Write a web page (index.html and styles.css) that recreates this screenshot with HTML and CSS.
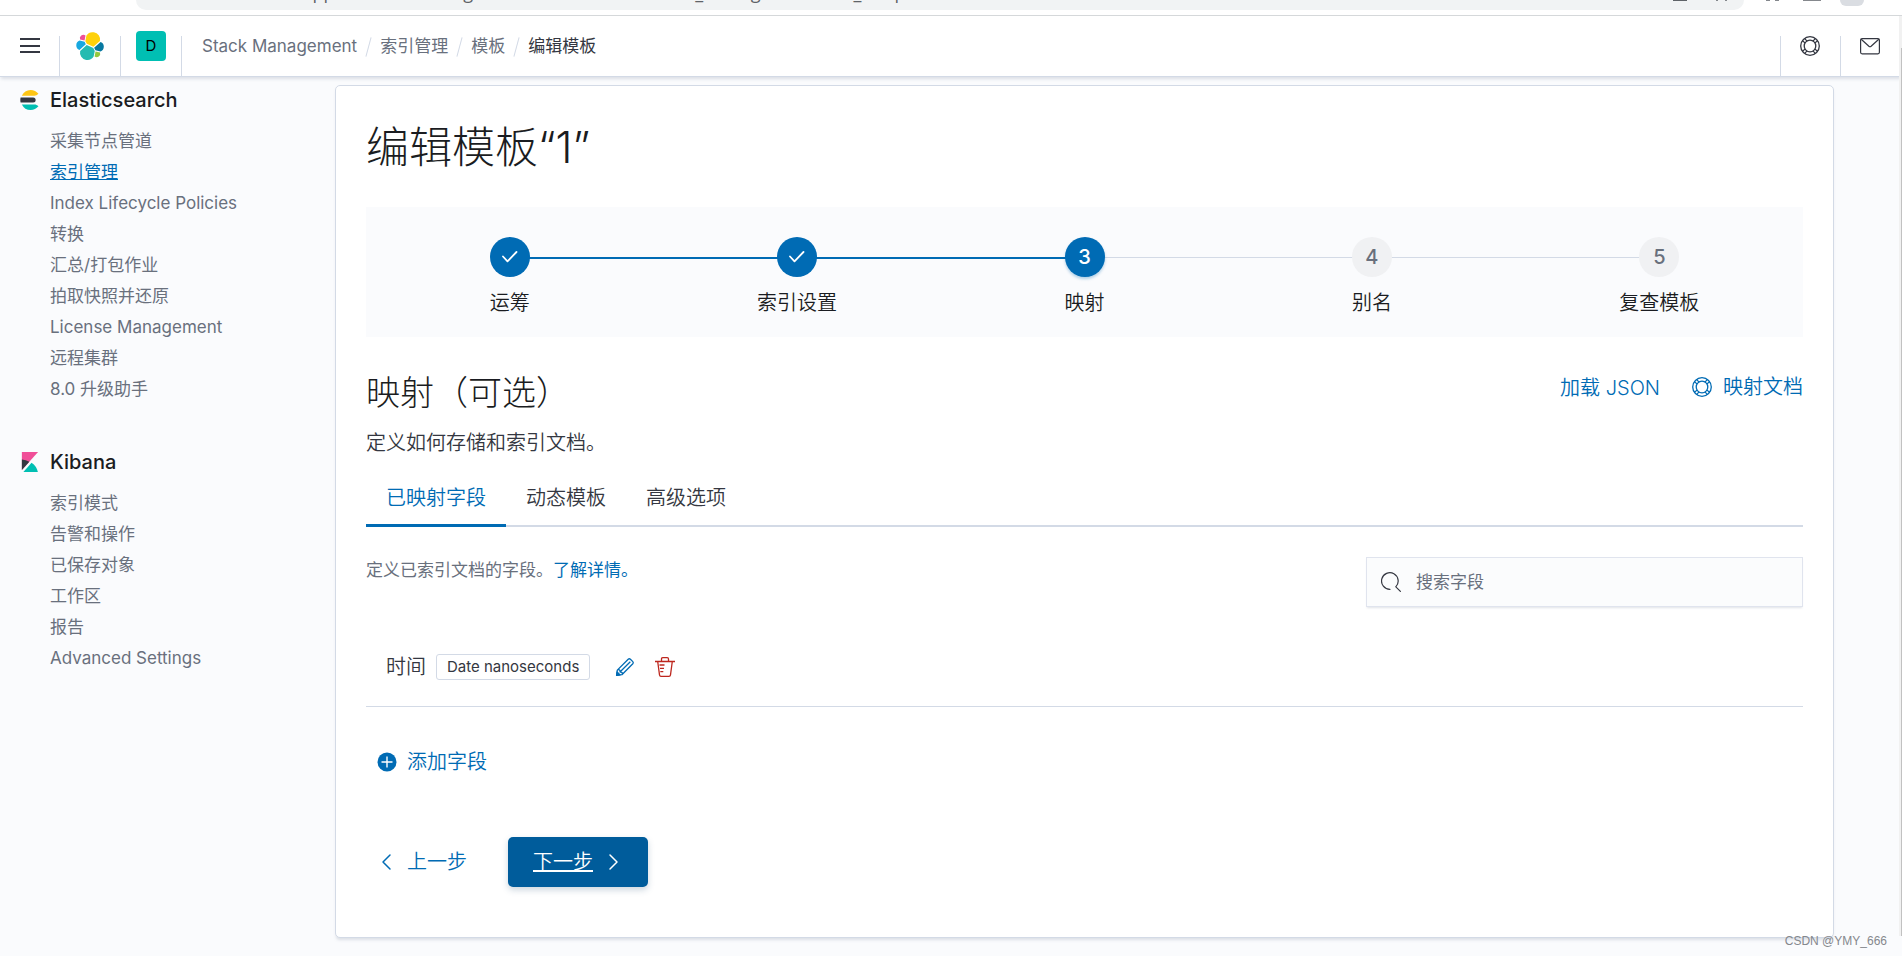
FILE: index.html
```html
<!DOCTYPE html>
<html lang="zh-CN">
<head>
<meta charset="utf-8">
<title>编辑模板 - Elastic</title>
<link rel="stylesheet" href="styles.css">
</head>
<body>
<svg class="defs" aria-hidden="true">
  <symbol id="i-help" viewBox="0 0 20 20"><g fill="none" stroke="currentColor" stroke-width="1.300"><circle cx="10" cy="10" r="9.300"/><circle cx="10" cy="10" r="5.800"/><path d="M4.600 2.400l2.400 2.700M2.400 4.600l2.700 2.400M15.400 2.400l-2.400 2.700M17.600 4.600l-2.700 2.400M4.600 17.600l2.400-2.700M2.400 15.400l2.700-2.400M15.400 17.600l-2.400-2.700M17.600 15.400l-2.700-2.400" stroke-width="1.200"/></g></symbol>
</svg>
<div class="browser">
  <div class="browser-address"><span class="url">/app/kibana#/management/elasticsearch/index_management/edit_template/1</span><span class="marks"><i></i><i></i></span></div>
  <div class="browser-tools"><i class="grid"></i><i></i><i class="profile"></i></div>
</div>
<header class="header">
  <button class="header-item" aria-label="菜单"><svg width="20" height="20" viewBox="0 0 20 20"><path d="M0 3h20M0 10h20M0 16h20" stroke="#343741" stroke-width="2"/></svg></button>
  <a class="header-item" href="#" aria-label="Elastic"><svg class="logo" width="30" height="30" viewBox="0 0 32 32"><path fill="#FED10A" d="M12.600 13.700l7 3.200 7-6.200a7.800 7.800 0 0 0-6.500-9.300 7.800 7.800 0 0 0-7.900 3.400l-1.200 6.100z"/><path fill="#24BBB1" d="M5.500 21.300a7.900 7.900 0 0 0 6.400 9.500 7.900 7.900 0 0 0 8-3.500l1.200-6.100-1.600-3-7-3.200z"/><path fill="#EF5098" d="M5.400 9.100l4.800 1.100 1-5.500a3.800 3.800 0 0 0-5.800 4.400z"/><path fill="#17A8E0" d="M5 10.200a5.300 5.300 0 0 0-.2 10l6.700-6.100-1.200-2.700z"/><path fill="#93C83E" d="M20.900 27.200a3.800 3.800 0 0 0 5.800-4.300l-4.800-1.100z"/><path fill="#0779A1" d="M21.800 20.500l5.300 1.300a5.300 5.300 0 0 0 .2-10l-6.900 6z"/></svg></a>
  <button class="header-item"><span class="avatar">D</span></button>
  <nav class="crumbs" aria-label="导航"><a href="#">Stack Management</a><a href="#">索引管理</a><a href="#">模板</a><span>编辑模板</span></nav>
  <button class="header-item right" aria-label="帮助"><svg width="20" height="20"><use href="#i-help"/></svg></button>
  <button class="header-item right" aria-label="新闻"><svg width="20" height="20" viewBox="0 0 20 20" fill="none" stroke="#343741" stroke-width="1.200"><rect x=".6" y="2.600" width="18.800" height="15.200" rx="1.500"/><path d="M1.200 3.200l7.700 7.100q1.100.9 2.200 0l7.700-7.100"/></svg></button>
</header>
<div class="page">
  <nav class="side" aria-label="Stack Management">
    <section>
      <h2><svg width="20" height="20" viewBox="0 0 32 32"><path fill="#FEC514" d="M3 9a16 16 0 0 1 14-9c5 0 9.400 2.400 12.500 6-2 2-4 3-6.500 3z"/><path fill="#343741" d="M1 12h20a4 4 0 0 1 0 8H1a16 16 0 0 1 0-8z"/><path fill="#00BFB3" d="M3 23h20c2.500 0 4.500 1 6.500 3A16.500 16.500 0 0 1 17 32 16 16 0 0 1 3 23z"/></svg>Elasticsearch</h2>
      <a href="#">采集节点管道</a><a href="#" class="on">索引管理</a><a href="#">Index Lifecycle Policies</a><a href="#">转换</a><a href="#">汇总/打包作业</a><a href="#">拍取快照并还原</a><a href="#">License Management</a><a href="#">远程集群</a><a href="#">8.0 升级助手</a>
    </section>
    <section>
      <h2><svg width="20" height="20" viewBox="0 0 32 32"><path fill="#F04E98" d="M3 0v28.800L28.900 0z"/><path fill="#343741" d="M3 12v16.800l11.900-13.200A25 25 0 0 0 3 12z"/><path fill="#00BFB3" d="M18.500 17.200L5.400 31.900h23.200a24 24 0 0 0-10.100-14.700z"/></svg>Kibana</h2>
      <a href="#">索引模式</a><a href="#">告警和操作</a><a href="#">已保存对象</a><a href="#">工作区</a><a href="#">报告</a><a href="#">Advanced Settings</a>
    </section>
  </nav>
  <main class="panel">
    <h1>编辑模板“1”</h1>
    <ol class="steps">
      <li class="done"><button><b><svg width="20" height="20" viewBox="0 0 20 20"><path d="M3 9.500l4.500 4.800L16.500 5" fill="none" stroke="#fff" stroke-width="1.800" stroke-linecap="round" stroke-linejoin="round"/></svg></b>运筹</button></li>
      <li class="done"><button><b><svg width="20" height="20" viewBox="0 0 20 20"><path d="M3 9.500l4.500 4.800L16.500 5" fill="none" stroke="#fff" stroke-width="1.800" stroke-linecap="round" stroke-linejoin="round"/></svg></b>索引设置</button></li>
      <li class="current"><button><b>3</b>映射</button></li>
      <li><button><b>4</b>别名</button></li>
      <li><button><b>5</b>复查模板</button></li>
    </ol>
    <div class="intro">
      <div><h2>映射（可选）</h2><p>定义如何存储和索引文档。</p></div>
      <div class="links"><button>加载 JSON</button><a href="#"><svg width="20" height="20"><use href="#i-help"/></svg>映射文档</a></div>
    </div>
    <div class="tabs" role="tablist"><button role="tab" aria-selected="true">已映射字段</button><button role="tab">动态模板</button><button role="tab">高级选项</button></div>
    <div class="tools">
      <p>定义已索引文档的字段。<a href="#">了解详情。</a></p>
      <label class="search"><svg width="20" height="20" viewBox="0 0 20 20" fill="none" stroke="#343741" stroke-width="1.200" stroke-linecap="round"><path d="M9 17.300A8.300 8.300 0 1 1 14.800 14.800l4.600 4.600"/></svg><input type="search" placeholder="搜索字段" aria-label="搜索字段"></label>
    </div>
    <div class="field">
      <span>时间</span><span class="badge">Date nanoseconds</span>
      <button aria-label="编辑" class="edit"><svg width="20" height="20" viewBox="0 0 20 20" fill="none" stroke="currentColor" stroke-width="1.300" stroke-linejoin="round"><path d="M1.600 18.400l.7-5.300L13.200 2.200q1.100-1 2.200 0l2.400 2.400q1 1.100 0 2.200L6.900 17.700zM4.700 15.300L15.300 4.700M2.600 12.800q2.700-.6 2.500 2.300 2.800-.3 2.100 2.300"/><path d="M1.600 18.400l.5-3.500 3 3z" fill="currentColor"/></svg></button>
      <button aria-label="删除" class="del"><svg width="20" height="20" viewBox="0 0 20 20" fill="none" stroke="currentColor" stroke-width="1.300" stroke-linejoin="round"><path d="M0 4.500h20M6.500 4.500V2q0-1.300 1.300-1.300h4.400q1.300 0 1.300 1.300v2.500M2.700 4.500l1.800 13.400q.2 1.400 1.500 1.400h8q1.300 0 1.500-1.400l1.800-13.400M4.500 8h5M5 11.300h4M5.300 14.600h3"/></svg></button>
    </div>
    <button class="add"><svg width="20" height="20" viewBox="0 0 20 20"><circle cx="10" cy="10" r="9.500" fill="#006BB4"/><path d="M10 4.500v11M4.500 10h11" stroke="#fff" stroke-width="1.400"/></svg>添加字段</button>
    <div class="actions">
      <button class="prev"><svg width="20" height="20" viewBox="0 0 20 20" fill="none" stroke="currentColor" stroke-width="1.500" stroke-linecap="round" stroke-linejoin="round"><path d="M13 3L6 10l7 7"/></svg>上一步</button>
      <button class="next"><span>下一步</span><svg width="20" height="20" viewBox="0 0 20 20" fill="none" stroke="currentColor" stroke-width="1.500" stroke-linecap="round" stroke-linejoin="round"><path d="M7 3l7 7-7 7"/></svg></button>
    </div>
  </main>
</div>
<div class="scroll"></div>
<div class="mark">CSDN @YMY_666</div>
</body>
</html>
```
FILE: styles.css
```css
* { box-sizing: border-box; }
body { margin: 0; min-height: 100vh; background: #fafbfd; color: #343741; font: 350 20px/30px Inter, "Noto Sans CJK SC", sans-serif; }
button { font: inherit; color: inherit; background: none; border: 0; padding: 0; cursor: pointer; }
a { color: #006bb4; text-decoration: none; }
h1, h2, p, ol { margin: 0; padding: 0; }
svg { flex: none; display: block; }
.defs { position: absolute; width: 0; height: 0; }

.browser { display: flex; align-items: flex-start; height: 16px; padding: 0 38px 0 136px; background: #fff; border-bottom: 1px solid #d5d8da; overflow: hidden; }
.browser-address { display: flex; justify-content: space-between; flex: 1; height: 10px; padding: 0 17px 0 160px; border-radius: 0 0 14px 14px; background: #f1f3f4; }
.url { margin-top: -20px; font: 18px/24px "Open Sans", sans-serif; color: #5f6368; white-space: nowrap; }
.marks { display: flex; gap: 29px; }
.marks i { width: 14px; height: 1px; background: #5f6368; }
.marks i + i { width: 11px; border: solid #85888d; border-width: 0 2px; background: none; }
.browser-tools { display: flex; gap: 24px; padding-left: 22px; }
.browser-tools i { width: 18px; height: 1px; background: #85888d; }
.browser-tools .grid { width: 13px; border: solid #85888d; border-width: 0 4px; background: none; }
.browser-tools .profile { width: 24px; height: 6px; margin-left: -5px; border-radius: 0 0 12px 12px; background: #dadde2; }

.header { position: relative; display: flex; height: 61px; padding: 0 2px 0 0; background: #fff; border-bottom: 1px solid #d3dae6; box-shadow: 0 3px 3px -1px rgba(152, 162, 179, .3); color: #343741; }
.header-item { display: flex; align-items: flex-start; justify-content: center; width: 60px; height: 40px; margin-top: 20px; border-right: 1px solid #d3dae6; }
.header-item + .header-item { width: 61px; }
.header-item + .header-item.right { width: 60px; }
.logo, .avatar { margin-top: -5px; }
.header-item.right { border-right: 0; border-left: 1px solid #d3dae6; padding-right: 1px; }
.avatar { width: 30px; height: 30px; border-radius: 4px; background: #00bfb3; color: #000; font-size: 15px; font-weight: 400; line-height: 30px; }
.crumbs { display: flex; flex: 1; align-items: center; padding-left: 20px; font-size: 17px; font-weight: 400; height: 60px; }
.crumbs > * { color: #69707d; }
.crumbs > span { color: #343741; }
.crumbs > * + *::before { content: ""; display: inline-block; width: 1px; height: 20px; margin: 0 11px; background: #d3dae6; transform: rotate(15deg); vertical-align: middle; }

.page { display: flex; gap: 15px; padding: 8px 68px 18px 20px; }
.side { width: 300px; flex: none; }
.side section { margin-bottom: 42px; }
.side h2 { display: flex; gap: 10px; align-items: center; height: 30px; margin-bottom: 11px; color: #1a1c21; font-size: 20px; font-weight: 500; }
.side a { display: block; margin-left: 30px; font-size: 17px; font-weight: 400; line-height: 31px; color: #69707d; }
.side a.on { color: #006bb4; text-decoration: underline; }

.panel { flex: 1; min-height: 853px; padding: 30px; background: #fff; border: 1px solid #d3dae6; border-radius: 5px; box-shadow: 0 3px 3px -1px rgba(152, 162, 179, .3); }
h1 { font-size: 43px; font-weight: 300; line-height: 62px; color: #1a1c21; margin-bottom: 29px; }
.steps { display: flex; list-style: none; background: #fafbfd; padding: 30px 0 19px; margin-bottom: 36px; }
.steps li { position: relative; flex: 1; text-align: center; color: #1a1c21; z-index: 1; }
.steps button { display: inline-flex; flex-direction: column; align-items: center; gap: 11px; position: relative; }
.steps b { display: flex; align-items: center; justify-content: center; width: 40px; height: 40px; border-radius: 50%; background: #f0f1f3; color: #69707d; font-weight: 500; }
.steps .done b, .steps .current b { background: #006bb4; color: #fff; }
.steps .current b { box-shadow: 0 2px 3px rgba(0, 107, 180, .3); }
.steps li + li::before { content: ""; position: absolute; top: 20px; right: 50%; width: 100%; height: 1px; background: #d3dae6; }
.steps .done + li::before { height: 2px; background: #006bb4; }
.steps li:nth-child(1) { z-index: 5; }
.steps li:nth-child(2) { z-index: 4; }
.steps li:nth-child(3) { z-index: 3; }
.steps li:nth-child(4) { z-index: 2; }

.intro { display: flex; justify-content: space-between; }
.intro h2 { font-size: 34px; font-weight: 300; line-height: 40px; color: #1a1c21; margin-bottom: 15px; }
.links { display: flex; gap: 32px; height: 28px; color: #006bb4; }
.links a { display: flex; align-items: center; gap: 11px; }
.tabs { display: flex; margin-top: 9px; border-bottom: 2px solid #d3dae6; }
.tabs button { height: 60px; margin-bottom: -2px; padding: 4px 20px 0; border-bottom: 3px solid transparent; }
.tabs [aria-selected] { color: #006bb4; border-color: #006bb4; }
.tools { display: flex; justify-content: space-between; margin-top: 30px; }
.tools p { font-size: 17px; font-weight: 400; line-height: 26px; color: #69707d; }
.search { display: flex; align-items: center; gap: 15px; width: 437px; height: 50px; padding: 0 14px; background: #fbfcfd; border: 1px solid #e0e4ee; box-shadow: 0 2px 2px -1px rgba(152, 162, 179, .3); }
.search input { flex: 1; min-width: 0; border: 0; padding: 0; outline: 0; background: none; font: inherit; font-size: 17px; font-weight: 400; }
.search input::placeholder { color: #69707d; opacity: 1; }
.field { display: flex; align-items: center; height: 81px; margin-top: 19px; padding: 2px 0 0 20px; border-bottom: 1px solid #d3dae6; }
.badge { margin: 0 25px 0 10px; padding: 0 10px; border: 1px solid #d3dae6; border-radius: 3px; font-size: 15px; line-height: 24px; font-weight: 400; }
.edit { color: #006bb4; margin-right: 20px; }
.del { color: #bd271e; }
.add { display: flex; align-items: center; gap: 10px; height: 50px; margin-top: 30px; padding-left: 11px; color: #006bb4; }
.actions { display: flex; gap: 16px; margin-top: 50px; }
.actions button { display: flex; align-items: center; height: 50px; }
.prev { gap: 10px; padding: 0 25px 0 11px; color: #006bb4; }
.actions .next { gap: 10px; justify-content: center; width: 140px; border-radius: 5px; background: #005c9b; color: #fff; box-shadow: 0 3px 6px rgba(54, 97, 126, .25); }
.next span { text-decoration: underline; }
.scroll { position: absolute; top: 16px; right: 0; width: 3px; height: 920px; background: #f1f1f1; }
.scroll::after { content: ""; position: absolute; top: 32px; right: 0; width: 1px; height: 888px; background: #c1c1c1; }
.mark { position: absolute; right: 15px; bottom: 5px; font: 12px/20px "Liberation Sans", sans-serif; color: #85888d; }
```
